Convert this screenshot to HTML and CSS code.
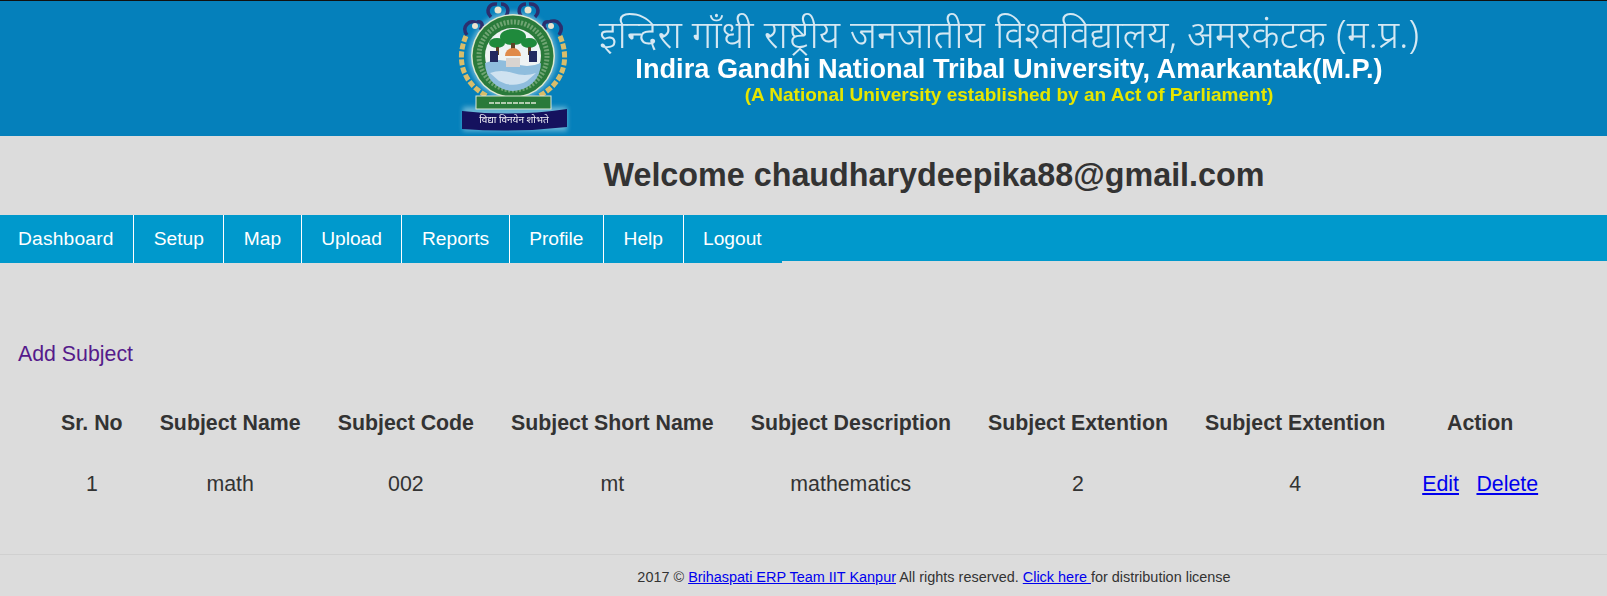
FILE: index.html
```html
<!DOCTYPE html>
<html lang="en">
<head>
<meta charset="utf-8">
<title>Subjects</title>
<link rel="stylesheet" href="styles.css">
</head>
<body>
<header class="banner">
  <svg class="logo" viewBox="0 0 120 134" aria-hidden="true">
    <defs>
      <filter id="halo" x="-20%" y="-20%" width="140%" height="140%"><feGaussianBlur stdDeviation="2.500"/></filter>
    </defs>
    <g filter="url(#halo)" fill="#bfe4ee" opacity="0.55">
      <circle cx="60" cy="55" r="44"/><rect x="10" y="106" width="104" height="24"/>
    </g>
    <g fill="none" stroke="#2c2f6e" stroke-width="3.500">
      <path d="M38 16c-6-6-2-14 6-13M53 15c4-6 1-12-5-12"/>
      <path d="M68 15c-4-6-1-12 5-12M82 16c6-6 2-14-6-13"/>
      <path d="M14 34c-6-8 2-16 10-12M27 29c4-5 2-9-3-8"/>
      <path d="M96 21c8-4 16 4 10 13M93 29c-4-5-2-9 3-8"/>
    </g>
    <g fill="#e9e4cf"><circle cx="45" cy="9" r="3.500"/><circle cx="75" cy="9" r="3.500"/><circle cx="22" cy="25" r="3"/><circle cx="98" cy="25" r="3"/></g>
    <g fill="none" stroke="#d9bd6a" stroke-width="5" stroke-dasharray="6 2">
      <path d="M13 35C3 58 9 82 34 95"/><path d="M107 35C117 58 111 82 86 95"/>
    </g>
    <circle cx="60" cy="55" r="42" fill="#dfe9d2"/>
    <circle cx="60" cy="55" r="40.500" fill="#2a7a3a"/>
    <circle cx="60" cy="55" r="34" fill="none" stroke="#6fa472" stroke-width="5" stroke-dasharray="2 1.500"/>
    <circle cx="60" cy="55" r="28" fill="#eef3f4"/>
    <path d="M32 62q14-6 28 0t28 0a28 28 0 0 1-56 0z" fill="#8fbddd"/>
    <path d="M37 72q11-4 23 0t23 0l-9 8a28 28 0 0 1-28 0z" fill="#cfe2f0"/>
    <ellipse cx="60" cy="36" rx="13" ry="8" fill="#1f8a3c"/><ellipse cx="44" cy="42" rx="8" ry="5" fill="#1f8a3c"/><ellipse cx="76" cy="42" rx="8" ry="5" fill="#1f8a3c"/>
    <path d="M58 42h4v9h-4zM43 46h3v8h-3zM75 46h3v8h-3z" fill="#5e4326"/>
    <path d="M52 55a8 8 0 0 1 16 0z" fill="#e08a4a"/>
    <path d="M53 57h14v9H53z" fill="#d9d4d0"/>
    <path d="M37 50h8v11h-8zM76 50h8v11h-8z" fill="#23295f"/>
    <rect x="23" y="95" width="75" height="13" fill="#2a7a3a" stroke="#dfe8d8"/>
    <path d="M36 102h48" stroke="#dfe8d8" stroke-dasharray="5 1" stroke-width="1.500"/>
    <path d="M9 110q52 6 105-2v18q-52 6-105 2z" fill="#15125e"/>
    <text x="61" y="122" class="motto">विद्या विनयेन शोभते</text>
  </svg>
  <div class="banner-text">
    <p class="hindi">इन्दिरा गाँधी राष्ट्रीय जनजातीय विश्वविद्यालय, अमरकंटक (म.प्र.)</p>
    <p class="english">Indira Gandhi National Tribal University, Amarkantak(M.P.)</p>
    <p class="tagline">(A National University established by an Act of Parliament)</p>
  </div>
</header>
<h1 class="welcome">Welcome chaudharydeepika88@gmail.com</h1>
<nav class="menu">
  <a href="#">Dashboard</a>
  <a href="#">Setup</a>
  <a href="#">Map</a>
  <a href="#">Upload</a>
  <a href="#">Reports</a>
  <a href="#">Profile</a>
  <a href="#">Help</a>
  <a href="#">Logout</a>
</nav>
<main class="content">
  <a class="add" href="#">Add Subject</a>
  <table class="subjects">
    <thead>
      <tr><th>Sr. No</th><th>Subject Name</th><th>Subject Code</th><th>Subject Short Name</th><th>Subject Description</th><th>Subject Extention</th><th>Subject Extention</th><th>Action</th></tr>
    </thead>
    <tbody>
      <tr><td>1</td><td>math</td><td>002</td><td>mt</td><td>mathematics</td><td>2</td><td>4</td><td class="actions"><a href="#">Edit</a><a href="#">Delete</a></td></tr>
    </tbody>
  </table>
</main>
<footer class="foot">2017 © <a href="#">Brihaspati ERP Team IIT Kanpur</a> All rights reserved. <a href="#">Click here </a>for distribution license</footer>
</body>
</html>
```
FILE: styles.css
```css
* { box-sizing: border-box; }
html, body { margin: 0; }
body {
  background: #dcdcdc;
  color: #333;
  font-family: "Liberation Sans", Arial, sans-serif;
  font-size: 21.330px;
  height: 596px;
  overflow: hidden;
}
.banner {
  height: 136px;
  background: #0580bb;
  border-top: 1px solid #111;
  display: flex;
  align-items: flex-start;
  padding: 0 0 0 453px;
}
.logo { width: 120px; height: 134px; filter: blur(0.5px); flex: none; }
.motto { fill: #f0f0f5; font-size: 10px; text-anchor: middle; font-family: "Noto Sans", sans-serif; }
.banner-text {
  width: 850px;
  margin-left: 11px;
  display: flex;
  flex-direction: column;
  align-items: center;
  filter: blur(0.4px);
}
.banner-text p { margin: 0; white-space: nowrap; }
.hindi { color: #d5e8f3; font-weight: 300; font-size: 38.500px; line-height: 50px; height: 53px; padding-top: 7px; font-family: "Noto Sans", "Liberation Sans", sans-serif; }
.english { color: #fff; font-weight: bold; font-size: 27.200px; line-height: 30px; }
.tagline { color: #e6e600; font-weight: bold; font-size: 19px; line-height: 22px; }
.welcome {
  margin: 0;
  height: 79px;
  padding-left: 261px;
  text-align: center;
  font-size: 32.300px;
  line-height: 78px;
}
.menu {
  display: flex;
  height: 48px;
  background: linear-gradient(#0099cc 46px, transparent 46px);
  text-rendering: optimizeSpeed;
}
.menu a {
  height: 48px;
  background: #0099cc;
  color: #fff;
  text-decoration: none;
  font-size: 19.200px;
  line-height: 48px;
  padding: 0 19.500px;
  border-right: 1px solid #fff;
}
.menu a:first-child { padding-left: 18px; letter-spacing: 0.2px; }
.menu a:last-child { border-right: 0; padding-right: 20px; }
.content { padding: 77px 18px 0; }
.add { color: #551a8b; text-decoration: none; display: block; line-height: 29px; }
.subjects { border-collapse: collapse; margin: 24px 0 0 24.500px; }
.subjects th { font-weight: bold; height: 61px; padding: 0 18.500px; text-align: center; white-space: nowrap; }
.subjects td { height: 61px; padding: 0 18.500px; text-align: center; }
.actions a { color: #0000ee; }
.actions a + a { margin-left: 17.500px; }
.foot {
  margin-top: 39px;
  border-top: 1px solid #d0d0d0;
  padding: 12px 0 0 261px;
  text-align: center;
  font-size: 14.450px;
  line-height: 20px;
}
.foot a { color: #0000ee; }
```
